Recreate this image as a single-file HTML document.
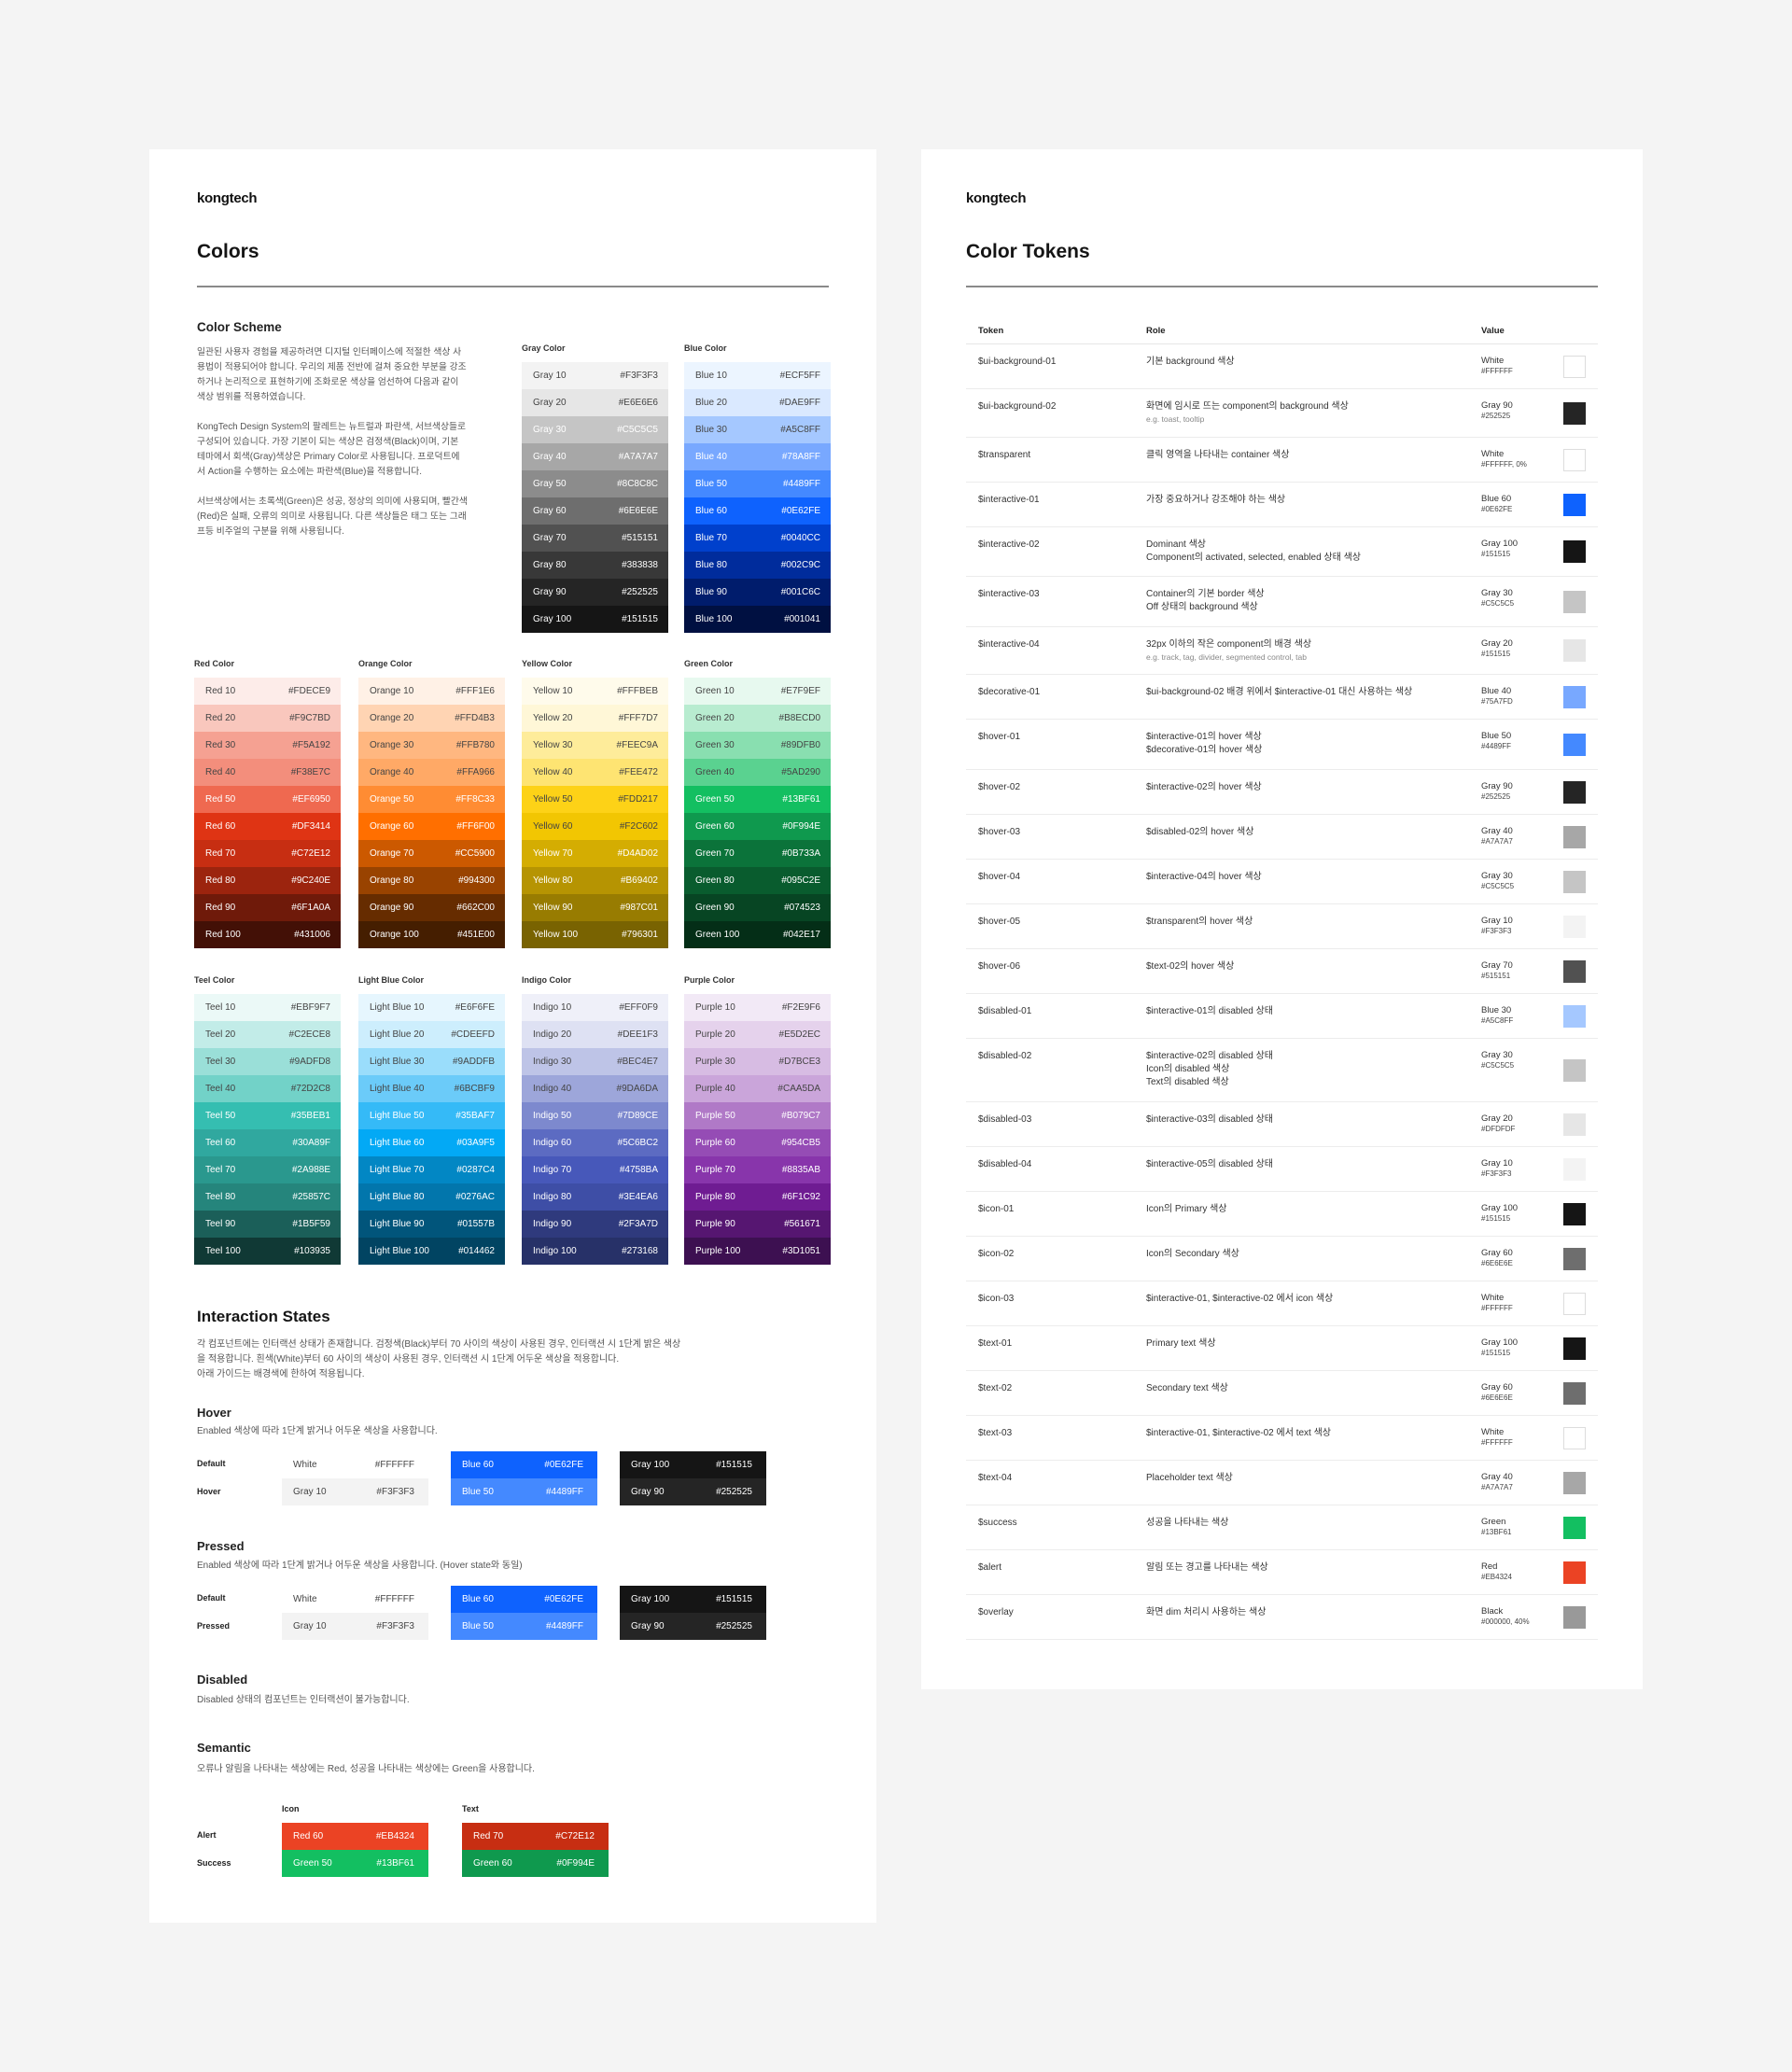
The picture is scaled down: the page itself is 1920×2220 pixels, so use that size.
<!DOCTYPE html>
<html><head><meta charset="utf-8">
<style>
*{margin:0;padding:0;box-sizing:border-box}
body{width:1920px;height:2220px;background:#f4f4f4;font-family:"Liberation Sans","Noto Sans CJK KR",sans-serif;color:#222;position:relative;overflow:hidden}
.card{position:absolute;background:#fff}
.a{position:absolute;white-space:nowrap}
.logo{font-size:15px;font-weight:bold;letter-spacing:-0.3px;color:#111}
.h1{font-size:21px;font-weight:bold;color:#151515}
.hr{position:absolute;height:1.5px;background:#8a8a8a}
.h2{font-size:13.5px;font-weight:bold;color:#222}
.h3{font-size:17px;font-weight:bold;color:#151515}
.h4{font-size:13px;font-weight:bold;color:#222}
.p{font-size:10px;color:#555;line-height:16px}
.pal{position:absolute;width:157px}
.lab{position:absolute;top:-20px;left:0;font-size:9px;font-weight:bold;color:#333}
.r{height:29px;display:flex;justify-content:space-between;align-items:center;padding:0 11px 0 12px;font-size:10px;color:#444}
.r.w{color:#fff}
.lbl{font-size:9px;font-weight:bold;color:#222}
.cell{position:absolute;width:157px;height:29px;display:flex;justify-content:space-between;align-items:center;padding:0 15px 0 12px;font-size:10px;color:#444}
.cell.w{color:#fff}
.tbl{position:absolute;left:1035px;top:340px;width:677px}
.th{height:29px;display:flex;align-items:center;font-size:9.5px;font-weight:bold;color:#222;border-bottom:1px solid #e6e6e6}
.tr{display:flex;align-items:center;border-bottom:1px solid #ececec;font-size:10px;color:#333;position:relative}
.c1{position:absolute;left:13px;top:12px;line-height:14px}
.c2{position:absolute;left:193px;top:12px;line-height:14px}
.c2 .s{font-size:8.5px;color:#888;line-height:12px}
.c3{position:absolute;left:552px;top:12px;line-height:11px;font-size:9.5px}
.c3 .s{font-size:8px;color:#444}
.sw{position:absolute;left:640px;width:24px;height:24px;top:50%;margin-top:-12px}
.bd{border:1px solid #ddd}
</style></head><body>

<div class="card" style="left:160px;top:160px;width:779px;height:1900px"></div>
<div class="card" style="left:987px;top:160px;width:773px;height:1650px"></div>

<!-- LEFT -->
<div class="a logo" style="left:211px;top:204px">kongtech</div>
<div class="a h1" style="left:211px;top:258px">Colors</div>
<div class="hr" style="left:211px;top:306px;width:677px"></div>
<div class="a h2" style="left:211px;top:343px">Color Scheme</div>
<div class="a p" style="left:211px;top:370px;white-space:normal;width:290px;font-size:9.8px">
<div>일관된 사용자 경험을 제공하려면 디지털 인터페이스에 적절한 색상 사용법이 적용되어야 합니다. 우리의 제품 전반에 걸쳐 중요한 부분을 강조하거나 논리적으로 표현하기에 조화로운 색상을 엄선하여 다음과 같이 색상 범위를 적용하였습니다.</div>
<div style="margin-top:16px">KongTech Design System의 팔레트는 뉴트럴과 파란색, 서브색상들로 구성되어 있습니다. 가장 기본이 되는 색상은 검정색(Black)이며, 기본 테마에서 회색(Gray)색상은 Primary Color로 사용됩니다. 프로덕트에서 Action을 수행하는 요소에는 파란색(Blue)을 적용합니다.</div>
<div style="margin-top:16px">서브색상에서는 초록색(Green)은 성공, 정상의 의미에 사용되며, 빨간색(Red)은 실패, 오류의 의미로 사용됩니다. 다른 색상들은 태그 또는 그래프등 비주얼의 구분을 위해 사용됩니다.</div>
</div>

<div class="pal" style="left:559px;top:388px"><div class="lab">Gray Color</div>
<div class="r" style="background:#F3F3F3"><span>Gray 10</span><span>#F3F3F3</span></div>
<div class="r" style="background:#E6E6E6"><span>Gray 20</span><span>#E6E6E6</span></div>
<div class="r w" style="background:#C5C5C5"><span>Gray 30</span><span>#C5C5C5</span></div>
<div class="r w" style="background:#A7A7A7"><span>Gray 40</span><span>#A7A7A7</span></div>
<div class="r w" style="background:#8C8C8C"><span>Gray 50</span><span>#8C8C8C</span></div>
<div class="r w" style="background:#6E6E6E"><span>Gray 60</span><span>#6E6E6E</span></div>
<div class="r w" style="background:#515151"><span>Gray 70</span><span>#515151</span></div>
<div class="r w" style="background:#383838"><span>Gray 80</span><span>#383838</span></div>
<div class="r w" style="background:#252525"><span>Gray 90</span><span>#252525</span></div>
<div class="r w" style="background:#151515"><span>Gray 100</span><span>#151515</span></div>
</div>
<div class="pal" style="left:733px;top:388px"><div class="lab">Blue Color</div>
<div class="r" style="background:#ECF5FF"><span>Blue 10</span><span>#ECF5FF</span></div>
<div class="r" style="background:#DAE9FF"><span>Blue 20</span><span>#DAE9FF</span></div>
<div class="r" style="background:#A5C8FF"><span>Blue 30</span><span>#A5C8FF</span></div>
<div class="r w" style="background:#78A8FF"><span>Blue 40</span><span>#78A8FF</span></div>
<div class="r w" style="background:#4489FF"><span>Blue 50</span><span>#4489FF</span></div>
<div class="r w" style="background:#0E62FE"><span>Blue 60</span><span>#0E62FE</span></div>
<div class="r w" style="background:#0040CC"><span>Blue 70</span><span>#0040CC</span></div>
<div class="r w" style="background:#002C9C"><span>Blue 80</span><span>#002C9C</span></div>
<div class="r w" style="background:#001C6C"><span>Blue 90</span><span>#001C6C</span></div>
<div class="r w" style="background:#001041"><span>Blue 100</span><span>#001041</span></div>
</div>

<div class="pal" style="left:208px;top:726px"><div class="lab">Red Color</div>
<div class="r" style="background:#FDECE9"><span>Red 10</span><span>#FDECE9</span></div>
<div class="r" style="background:#F9C7BD"><span>Red 20</span><span>#F9C7BD</span></div>
<div class="r" style="background:#F5A192"><span>Red 30</span><span>#F5A192</span></div>
<div class="r" style="background:#F38E7C"><span>Red 40</span><span>#F38E7C</span></div>
<div class="r w" style="background:#EF6950"><span>Red 50</span><span>#EF6950</span></div>
<div class="r w" style="background:#DF3414"><span>Red 60</span><span>#DF3414</span></div>
<div class="r w" style="background:#C72E12"><span>Red 70</span><span>#C72E12</span></div>
<div class="r w" style="background:#9C240E"><span>Red 80</span><span>#9C240E</span></div>
<div class="r w" style="background:#6F1A0A"><span>Red 90</span><span>#6F1A0A</span></div>
<div class="r w" style="background:#431006"><span>Red 100</span><span>#431006</span></div>
</div>
<div class="pal" style="left:384px;top:726px"><div class="lab">Orange Color</div>
<div class="r" style="background:#FFF1E6"><span>Orange 10</span><span>#FFF1E6</span></div>
<div class="r" style="background:#FFD4B3"><span>Orange 20</span><span>#FFD4B3</span></div>
<div class="r" style="background:#FFB780"><span>Orange 30</span><span>#FFB780</span></div>
<div class="r" style="background:#FFA966"><span>Orange 40</span><span>#FFA966</span></div>
<div class="r w" style="background:#FF8C33"><span>Orange 50</span><span>#FF8C33</span></div>
<div class="r w" style="background:#FF6F00"><span>Orange 60</span><span>#FF6F00</span></div>
<div class="r w" style="background:#CC5900"><span>Orange 70</span><span>#CC5900</span></div>
<div class="r w" style="background:#994300"><span>Orange 80</span><span>#994300</span></div>
<div class="r w" style="background:#662C00"><span>Orange 90</span><span>#662C00</span></div>
<div class="r w" style="background:#451E00"><span>Orange 100</span><span>#451E00</span></div>
</div>
<div class="pal" style="left:559px;top:726px"><div class="lab">Yellow Color</div>
<div class="r" style="background:#FFFBEB"><span>Yellow 10</span><span>#FFFBEB</span></div>
<div class="r" style="background:#FFF7D7"><span>Yellow 20</span><span>#FFF7D7</span></div>
<div class="r" style="background:#FEEC9A"><span>Yellow 30</span><span>#FEEC9A</span></div>
<div class="r" style="background:#FEE472"><span>Yellow 40</span><span>#FEE472</span></div>
<div class="r" style="background:#FDD217"><span>Yellow 50</span><span>#FDD217</span></div>
<div class="r" style="background:#F2C602"><span>Yellow 60</span><span>#F2C602</span></div>
<div class="r w" style="background:#D4AD02"><span>Yellow 70</span><span>#D4AD02</span></div>
<div class="r w" style="background:#B69402"><span>Yellow 80</span><span>#B69402</span></div>
<div class="r w" style="background:#987C01"><span>Yellow 90</span><span>#987C01</span></div>
<div class="r w" style="background:#796301"><span>Yellow 100</span><span>#796301</span></div>
</div>
<div class="pal" style="left:733px;top:726px"><div class="lab">Green Color</div>
<div class="r" style="background:#E7F9EF"><span>Green 10</span><span>#E7F9EF</span></div>
<div class="r" style="background:#B8ECD0"><span>Green 20</span><span>#B8ECD0</span></div>
<div class="r" style="background:#89DFB0"><span>Green 30</span><span>#89DFB0</span></div>
<div class="r" style="background:#5AD290"><span>Green 40</span><span>#5AD290</span></div>
<div class="r w" style="background:#13BF61"><span>Green 50</span><span>#13BF61</span></div>
<div class="r w" style="background:#0F994E"><span>Green 60</span><span>#0F994E</span></div>
<div class="r w" style="background:#0B733A"><span>Green 70</span><span>#0B733A</span></div>
<div class="r w" style="background:#095C2E"><span>Green 80</span><span>#095C2E</span></div>
<div class="r w" style="background:#074523"><span>Green 90</span><span>#074523</span></div>
<div class="r w" style="background:#042E17"><span>Green 100</span><span>#042E17</span></div>
</div>

<div class="pal" style="left:208px;top:1065px"><div class="lab">Teel Color</div>
<div class="r" style="background:#EBF9F7"><span>Teel 10</span><span>#EBF9F7</span></div>
<div class="r" style="background:#C2ECE8"><span>Teel 20</span><span>#C2ECE8</span></div>
<div class="r" style="background:#9ADFD8"><span>Teel 30</span><span>#9ADFD8</span></div>
<div class="r" style="background:#72D2C8"><span>Teel 40</span><span>#72D2C8</span></div>
<div class="r w" style="background:#35BEB1"><span>Teel 50</span><span>#35BEB1</span></div>
<div class="r w" style="background:#30A89F"><span>Teel 60</span><span>#30A89F</span></div>
<div class="r w" style="background:#2A988E"><span>Teel 70</span><span>#2A988E</span></div>
<div class="r w" style="background:#25857C"><span>Teel 80</span><span>#25857C</span></div>
<div class="r w" style="background:#1B5F59"><span>Teel 90</span><span>#1B5F59</span></div>
<div class="r w" style="background:#103935"><span>Teel 100</span><span>#103935</span></div>
</div>
<div class="pal" style="left:384px;top:1065px"><div class="lab">Light Blue Color</div>
<div class="r" style="background:#E6F6FE"><span>Light Blue 10</span><span>#E6F6FE</span></div>
<div class="r" style="background:#CDEEFD"><span>Light Blue 20</span><span>#CDEEFD</span></div>
<div class="r" style="background:#9ADDFB"><span>Light Blue 30</span><span>#9ADDFB</span></div>
<div class="r" style="background:#6BCBF9"><span>Light Blue 40</span><span>#6BCBF9</span></div>
<div class="r w" style="background:#35BAF7"><span>Light Blue 50</span><span>#35BAF7</span></div>
<div class="r w" style="background:#03A9F5"><span>Light Blue 60</span><span>#03A9F5</span></div>
<div class="r w" style="background:#0287C4"><span>Light Blue 70</span><span>#0287C4</span></div>
<div class="r w" style="background:#0276AC"><span>Light Blue 80</span><span>#0276AC</span></div>
<div class="r w" style="background:#01557B"><span>Light Blue 90</span><span>#01557B</span></div>
<div class="r w" style="background:#014462"><span>Light Blue 100</span><span>#014462</span></div>
</div>
<div class="pal" style="left:559px;top:1065px"><div class="lab">Indigo Color</div>
<div class="r" style="background:#EFF0F9"><span>Indigo 10</span><span>#EFF0F9</span></div>
<div class="r" style="background:#DEE1F3"><span>Indigo 20</span><span>#DEE1F3</span></div>
<div class="r" style="background:#BEC4E7"><span>Indigo 30</span><span>#BEC4E7</span></div>
<div class="r" style="background:#9DA6DA"><span>Indigo 40</span><span>#9DA6DA</span></div>
<div class="r w" style="background:#7D89CE"><span>Indigo 50</span><span>#7D89CE</span></div>
<div class="r w" style="background:#5C6BC2"><span>Indigo 60</span><span>#5C6BC2</span></div>
<div class="r w" style="background:#4758BA"><span>Indigo 70</span><span>#4758BA</span></div>
<div class="r w" style="background:#3E4EA6"><span>Indigo 80</span><span>#3E4EA6</span></div>
<div class="r w" style="background:#2F3A7D"><span>Indigo 90</span><span>#2F3A7D</span></div>
<div class="r w" style="background:#273168"><span>Indigo 100</span><span>#273168</span></div>
</div>
<div class="pal" style="left:733px;top:1065px"><div class="lab">Purple Color</div>
<div class="r" style="background:#F2E9F6"><span>Purple 10</span><span>#F2E9F6</span></div>
<div class="r" style="background:#E5D2EC"><span>Purple 20</span><span>#E5D2EC</span></div>
<div class="r" style="background:#D7BCE3"><span>Purple 30</span><span>#D7BCE3</span></div>
<div class="r" style="background:#CAA5DA"><span>Purple 40</span><span>#CAA5DA</span></div>
<div class="r w" style="background:#B079C7"><span>Purple 50</span><span>#B079C7</span></div>
<div class="r w" style="background:#954CB5"><span>Purple 60</span><span>#954CB5</span></div>
<div class="r w" style="background:#8835AB"><span>Purple 70</span><span>#8835AB</span></div>
<div class="r w" style="background:#6F1C92"><span>Purple 80</span><span>#6F1C92</span></div>
<div class="r w" style="background:#561671"><span>Purple 90</span><span>#561671</span></div>
<div class="r w" style="background:#3D1051"><span>Purple 100</span><span>#3D1051</span></div>
</div>

<!-- Interaction -->
<div class="a h3" style="left:211px;top:1401px">Interaction States</div>
<div class="a p" style="left:211px;top:1433px">각 컴포넌트에는 인터랙션 상태가 존재합니다. 검정색(Black)부터 70 사이의 색상이 사용된 경우, 인터랙션 시 1단계 밝은 색상<br>을 적용합니다. 흰색(White)부터 60 사이의 색상이 사용된 경우, 인터랙션 시 1단계 어두운 색상을 적용합니다.<br>아래 가이드는 배경색에 한하여 적용됩니다.</div>

<div class="a h4" style="left:211px;top:1506px">Hover</div>
<div class="a p" style="left:211px;top:1526px">Enabled 색상에 따라 1단계 밝거나 어두운 색상을 사용합니다.</div>
<div class="a lbl" style="left:211px;top:1563px">Default</div>
<div class="a lbl" style="left:211px;top:1593px">Hover</div>
<div class="cell" style="left:302px;top:1555px;background:#fff"><span>White</span><span>#FFFFFF</span></div>
<div class="cell" style="left:302px;top:1584px;background:#F3F3F3"><span>Gray 10</span><span>#F3F3F3</span></div>
<div class="cell w" style="left:483px;top:1555px;background:#0E62FE"><span>Blue 60</span><span>#0E62FE</span></div>
<div class="cell w" style="left:483px;top:1584px;background:#4489FF"><span>Blue 50</span><span>#4489FF</span></div>
<div class="cell w" style="left:664px;top:1555px;background:#151515"><span>Gray 100</span><span>#151515</span></div>
<div class="cell w" style="left:664px;top:1584px;background:#252525"><span>Gray 90</span><span>#252525</span></div>

<div class="a h4" style="left:211px;top:1649px">Pressed</div>
<div class="a p" style="left:211px;top:1670px">Enabled 색상에 따라 1단계 밝거나 어두운 색상을 사용합니다. (Hover state와 동일)</div>
<div class="a lbl" style="left:211px;top:1707px">Default</div>
<div class="a lbl" style="left:211px;top:1737px">Pressed</div>
<div class="cell" style="left:302px;top:1699px;background:#fff"><span>White</span><span>#FFFFFF</span></div>
<div class="cell" style="left:302px;top:1728px;background:#F3F3F3"><span>Gray 10</span><span>#F3F3F3</span></div>
<div class="cell w" style="left:483px;top:1699px;background:#0E62FE"><span>Blue 60</span><span>#0E62FE</span></div>
<div class="cell w" style="left:483px;top:1728px;background:#4489FF"><span>Blue 50</span><span>#4489FF</span></div>
<div class="cell w" style="left:664px;top:1699px;background:#151515"><span>Gray 100</span><span>#151515</span></div>
<div class="cell w" style="left:664px;top:1728px;background:#252525"><span>Gray 90</span><span>#252525</span></div>

<div class="a h4" style="left:211px;top:1792px">Disabled</div>
<div class="a p" style="left:211px;top:1814px">Disabled 상태의 컴포넌트는 인터랙션이 불가능합니다.</div>

<div class="a h4" style="left:211px;top:1865px">Semantic</div>
<div class="a p" style="left:211px;top:1888px">오류나 알림을 나타내는 색상에는 Red, 성공을 나타내는 색상에는 Green을 사용합니다.</div>
<div class="a lbl" style="left:302px;top:1933px">Icon</div>
<div class="a lbl" style="left:495px;top:1933px">Text</div>
<div class="a lbl" style="left:211px;top:1961px">Alert</div>
<div class="a lbl" style="left:211px;top:1991px">Success</div>
<div class="cell w" style="left:302px;top:1953px;background:#EB4324"><span>Red 60</span><span>#EB4324</span></div>
<div class="cell w" style="left:302px;top:1982px;background:#13BF61"><span>Green 50</span><span>#13BF61</span></div>
<div class="cell w" style="left:495px;top:1953px;background:#C72E12"><span>Red 70</span><span>#C72E12</span></div>
<div class="cell w" style="left:495px;top:1982px;background:#0F994E"><span>Green 60</span><span>#0F994E</span></div>

<!-- RIGHT -->
<div class="a logo" style="left:1035px;top:204px">kongtech</div>
<div class="a h1" style="left:1035px;top:258px">Color Tokens</div>
<div class="hr" style="left:1035px;top:306px;width:677px"></div>

<div class="tbl">
<div class="th"><span style="position:absolute;left:13px">Token</span><span style="position:absolute;left:193px">Role</span><span style="position:absolute;left:552px">Value</span></div>
<div class="tr" style="height:48px"><div class="c1">$ui-background-01</div><div class="c2">기본 background 색상</div><div class="c3">White<br><span class="s">#FFFFFF</span></div><div class="sw bd" style="background:#fff"></div></div>
<div class="tr" style="height:52px"><div class="c2">화면에 임시로 뜨는 component의 background 색상<div class="s">e.g. toast, tooltip</div></div><div class="c1">$ui-background-02</div><div class="c3">Gray 90<br><span class="s">#252525</span></div><div class="sw" style="background:#252525"></div></div>
<div class="tr" style="height:48px"><div class="c1">$transparent</div><div class="c2">클릭 영역을 나타내는 container 색상</div><div class="c3">White<br><span class="s">#FFFFFF, 0%</span></div><div class="sw bd" style="background:#fff"></div></div>
<div class="tr" style="height:48px"><div class="c1">$interactive-01</div><div class="c2">가장 중요하거나 강조해야 하는 색상</div><div class="c3">Blue 60<br><span class="s">#0E62FE</span></div><div class="sw" style="background:#0E62FE"></div></div>
<div class="tr" style="height:53px"><div class="c1">$interactive-02</div><div class="c2">Dominant 색상<br>Component의 activated, selected, enabled 상태 색상</div><div class="c3">Gray 100<br><span class="s">#151515</span></div><div class="sw" style="background:#151515"></div></div>
<div class="tr" style="height:54px"><div class="c1">$interactive-03</div><div class="c2">Container의 기본 border 색상<br>Off 상태의 background 색상</div><div class="c3">Gray 30<br><span class="s">#C5C5C5</span></div><div class="sw" style="background:#C5C5C5"></div></div>
<div class="tr" style="height:51px"><div class="c1">$interactive-04</div><div class="c2">32px 이하의 작은 component의 배경 색상<div class="s">e.g. track, tag, divider, segmented control, tab</div></div><div class="c3">Gray 20<br><span class="s">#151515</span></div><div class="sw" style="background:#E6E6E6"></div></div>
<div class="tr" style="height:48px"><div class="c1">$decorative-01</div><div class="c2">$ui-background-02 배경 위에서 $interactive-01 대신 사용하는 색상</div><div class="c3">Blue 40<br><span class="s">#75A7FD</span></div><div class="sw" style="background:#78A8FF"></div></div>
<div class="tr" style="height:54px"><div class="c1">$hover-01</div><div class="c2">$interactive-01의 hover 색상<br>$decorative-01의 hover 색상</div><div class="c3">Blue 50<br><span class="s">#4489FF</span></div><div class="sw" style="background:#4489FF"></div></div>
<div class="tr" style="height:48px"><div class="c1">$hover-02</div><div class="c2">$interactive-02의 hover 색상</div><div class="c3">Gray 90<br><span class="s">#252525</span></div><div class="sw" style="background:#252525"></div></div>
<div class="tr" style="height:48px"><div class="c1">$hover-03</div><div class="c2">$disabled-02의 hover 색상</div><div class="c3">Gray 40<br><span class="s">#A7A7A7</span></div><div class="sw" style="background:#A7A7A7"></div></div>
<div class="tr" style="height:48px"><div class="c1">$hover-04</div><div class="c2">$interactive-04의 hover 색상</div><div class="c3">Gray 30<br><span class="s">#C5C5C5</span></div><div class="sw" style="background:#C5C5C5"></div></div>
<div class="tr" style="height:48px"><div class="c1">$hover-05</div><div class="c2">$transparent의 hover 색상</div><div class="c3">Gray 10<br><span class="s">#F3F3F3</span></div><div class="sw" style="background:#F3F3F3"></div></div>
<div class="tr" style="height:48px"><div class="c1">$hover-06</div><div class="c2">$text-02의 hover 색상</div><div class="c3">Gray 70<br><span class="s">#515151</span></div><div class="sw" style="background:#515151"></div></div>
<div class="tr" style="height:48px"><div class="c1">$disabled-01</div><div class="c2">$interactive-01의 disabled 상태</div><div class="c3">Blue 30<br><span class="s">#A5C8FF</span></div><div class="sw" style="background:#A5C8FF"></div></div>
<div class="tr" style="height:68px"><div class="c1">$disabled-02</div><div class="c2">$interactive-02의 disabled 상태<br>Icon의 disabled 색상<br>Text의 disabled 색상</div><div class="c3">Gray 30<br><span class="s">#C5C5C5</span></div><div class="sw" style="background:#C5C5C5"></div></div>
<div class="tr" style="height:48px"><div class="c1">$disabled-03</div><div class="c2">$interactive-03의 disabled 상태</div><div class="c3">Gray 20<br><span class="s">#DFDFDF</span></div><div class="sw" style="background:#E6E6E6"></div></div>
<div class="tr" style="height:48px"><div class="c1">$disabled-04</div><div class="c2">$interactive-05의 disabled 상태</div><div class="c3">Gray 10<br><span class="s">#F3F3F3</span></div><div class="sw" style="background:#F3F3F3"></div></div>
<div class="tr" style="height:48px"><div class="c1">$icon-01</div><div class="c2">Icon의 Primary 색상</div><div class="c3">Gray 100<br><span class="s">#151515</span></div><div class="sw" style="background:#151515"></div></div>
<div class="tr" style="height:48px"><div class="c1">$icon-02</div><div class="c2">Icon의 Secondary 색상</div><div class="c3">Gray 60<br><span class="s">#6E6E6E</span></div><div class="sw" style="background:#6E6E6E"></div></div>
<div class="tr" style="height:48px"><div class="c1">$icon-03</div><div class="c2">$interactive-01, $interactive-02 에서 icon 색상</div><div class="c3">White<br><span class="s">#FFFFFF</span></div><div class="sw bd" style="background:#fff"></div></div>
<div class="tr" style="height:48px"><div class="c1">$text-01</div><div class="c2">Primary text 색상</div><div class="c3">Gray 100<br><span class="s">#151515</span></div><div class="sw" style="background:#151515"></div></div>
<div class="tr" style="height:48px"><div class="c1">$text-02</div><div class="c2">Secondary text 색상</div><div class="c3">Gray 60<br><span class="s">#6E6E6E</span></div><div class="sw" style="background:#6E6E6E"></div></div>
<div class="tr" style="height:48px"><div class="c1">$text-03</div><div class="c2">$interactive-01, $interactive-02 에서 text 색상</div><div class="c3">White<br><span class="s">#FFFFFF</span></div><div class="sw bd" style="background:#fff"></div></div>
<div class="tr" style="height:48px"><div class="c1">$text-04</div><div class="c2">Placeholder text 색상</div><div class="c3">Gray 40<br><span class="s">#A7A7A7</span></div><div class="sw" style="background:#A7A7A7"></div></div>
<div class="tr" style="height:48px"><div class="c1">$success</div><div class="c2">성공을 나타내는 색상</div><div class="c3">Green<br><span class="s">#13BF61</span></div><div class="sw" style="background:#13BF61"></div></div>
<div class="tr" style="height:48px"><div class="c1">$alert</div><div class="c2">알림 또는 경고를 나타내는 색상</div><div class="c3">Red<br><span class="s">#EB4324</span></div><div class="sw" style="background:#EB4324"></div></div>
<div class="tr" style="height:48px"><div class="c1">$overlay</div><div class="c2">화면 dim 처리시 사용하는 색상</div><div class="c3">Black<br><span class="s">#000000, 40%</span></div><div class="sw" style="background:#999"></div></div>
</div>

</body></html>
